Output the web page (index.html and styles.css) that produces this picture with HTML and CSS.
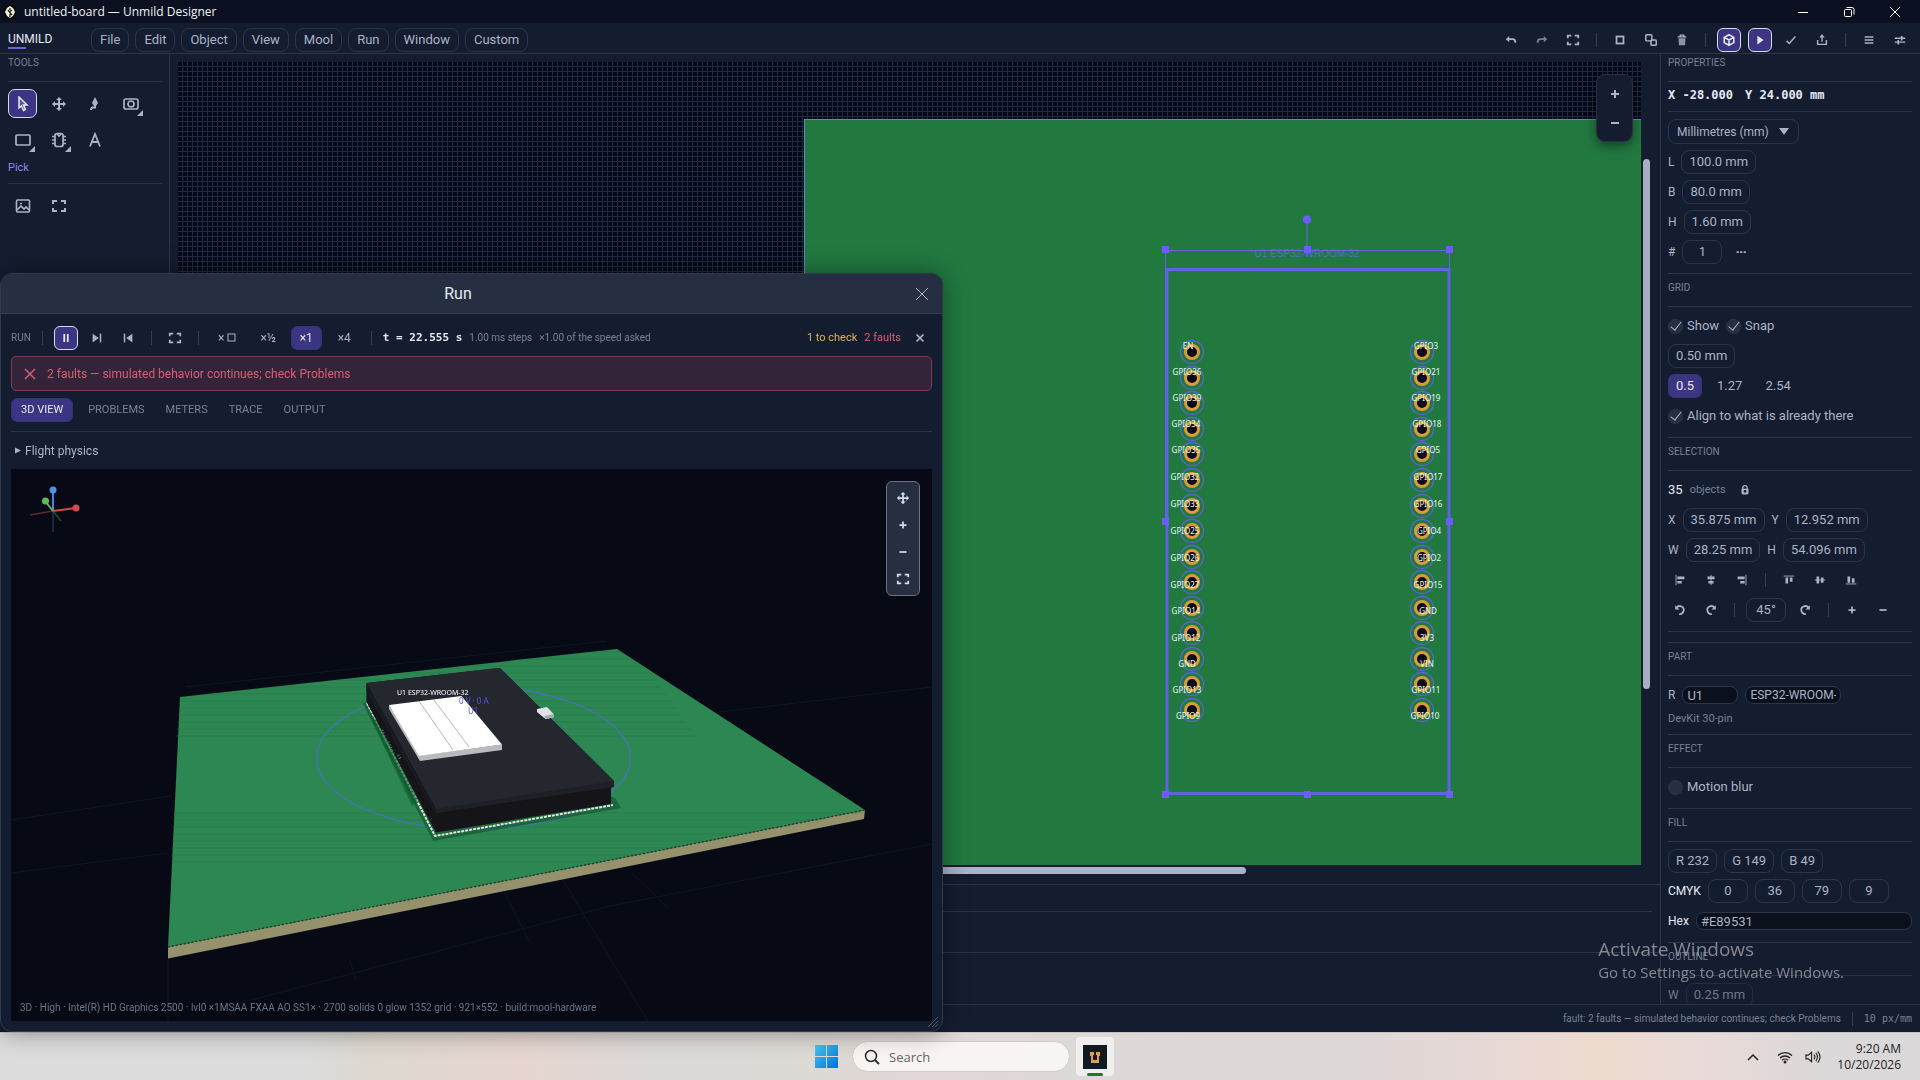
FILE: index.html
```html
<!DOCTYPE html>
<html lang="en">
<head>
<meta charset="utf-8">
<title>untitled-board — Unmild Designer</title>
<link rel="stylesheet" href="styles.css">
</head>
<body>
<svg class="defs" aria-hidden="true">
  <symbol id="i-fit" viewBox="0 0 16 16"><path d="M2 6V3h4M10 3h4v3M14 10v3h-4M6 13H2v-3" fill="none" stroke="currentColor" stroke-width="2"/></symbol>
  <symbol id="i-move" viewBox="0 0 16 16"><path d="M8 3v10M3 8h10" fill="none" stroke="currentColor" stroke-width="2"/><path d="M8 1l3 3H5zM8 15l3-3H5zM1 8l3-3v6zM15 8l-3-3v6z" fill="currentColor"/></symbol>
  <symbol id="i-plus" viewBox="0 0 16 16"><path d="M8 4v8M4 8h8" fill="none" stroke="currentColor" stroke-width="2"/></symbol>
  <symbol id="i-minus" viewBox="0 0 16 16"><path d="M4 8h8" fill="none" stroke="currentColor" stroke-width="2"/></symbol>
  <symbol id="i-x" viewBox="0 0 16 16"><path d="M4 4l8 8M12 4l-8 8" fill="none" stroke="currentColor" stroke-width="2"/></symbol>
  <symbol id="i-cw" viewBox="0 0 16 16"><path d="M12 5.500A4.500 4.500 0 1 0 9 12.500" fill="none" stroke="currentColor" stroke-width="2"/><path d="M13.500 2.500v5h-5z" fill="currentColor"/></symbol>
  <symbol id="i-ccw" viewBox="0 0 16 16"><path d="M4 5.500A4.500 4.500 0 1 1 7 12.500" fill="none" stroke="currentColor" stroke-width="2"/><path d="M2.500 2.500v5h5z" fill="currentColor"/></symbol>
  <g id="pad"><circle r="11.500" fill="none" stroke="#5b63d6" stroke-width="1.300"/><circle r="6.500" fill="#0a0a1a" stroke="#dc9a3a" stroke-width="3"/></g>
</svg>

<header class="titlebar">
  <svg class="app-ico" viewBox="0 0 12 14"><rect width="12" height="14" fill="#0a0a0a"/><path d="M3 3l3-2 3 2 2 4-2 4-3 2-3-2-2-4z" fill="#f2efdc"/><path d="M4 5l4 5M6 3v2M6 9v3M8 5l-3 2" stroke="#222" stroke-width="1.300"/></svg>
  <span class="title">untitled-board — Unmild Designer</span>
  <div class="winctl">
    <button aria-label="Minimize"><svg viewBox="0 0 12 12"><path d="M1 6.500h10"/></svg></button>
    <button aria-label="Restore"><svg viewBox="0 0 12 12"><rect x="1.500" y="3.500" width="7" height="7" rx="1"/><path d="M3.500 1.500h5.500a2 2 0 0 1 2 2v5"/></svg></button>
    <button aria-label="Close"><svg viewBox="0 0 12 12"><path d="M1 1l10 10M11 1L1 11"/></svg></button>
  </div>
</header>

<nav class="menubar">
  <span class="brand">UNMILD</span>
  <div class="menus">
    <button class="pill">File</button><button class="pill">Edit</button><button class="pill">Object</button><button class="pill">View</button><button class="pill">Mool</button><button class="pill">Run</button><button class="pill">Window</button><button class="pill">Custom</button>
  </div>
  <div class="bar">
    <button class="ib" aria-label="Undo"><svg viewBox="0 0 16 16"><path d="M4 7h6q3 0 3 4" fill="none" stroke="currentColor" stroke-width="2"/><path d="M2 7l4-3.500v7z" fill="currentColor"/></svg></button>
    <button class="ib dim" aria-label="Redo"><svg viewBox="0 0 16 16"><path d="M12 7H6q-3 0-3 4" fill="none" stroke="currentColor" stroke-width="2"/><path d="M14 7l-4-3.500v7z" fill="currentColor"/></svg></button>
    <button class="ib" aria-label="Fit"><svg><use href="#i-fit"/></svg></button>
    <i class="sep"></i>
    <button class="ib" aria-label="Select all"><svg viewBox="0 0 16 16"><rect x="4" y="4" width="8" height="8" fill="none" stroke="currentColor" stroke-width="2"/></svg></button>
    <button class="ib" aria-label="Duplicate"><svg viewBox="0 0 16 16"><rect x="2" y="2" width="7" height="7" rx="1" fill="none" stroke="currentColor" stroke-width="1.700"/><rect x="8" y="8" width="6" height="6" rx="1" fill="none" stroke="currentColor" stroke-width="1.700"/></svg></button>
    <button class="ib" aria-label="Delete"><svg viewBox="0 0 16 16"><path d="M3 4.500h10M6 4V2.500h4V4" fill="none" stroke="currentColor" stroke-width="1.500"/><path d="M4 6h8l-.5 8h-7z" fill="currentColor" opacity=".8"/></svg></button>
    <i class="sep"></i>
    <button class="ib on" aria-label="3D view"><svg viewBox="0 0 16 16"><path d="M8 2l5.500 3v6L8 14l-5.500-3V5zM2.500 5L8 8l5.500-3M8 8v6" fill="none" stroke="currentColor" stroke-width="1.800"/></svg></button>
    <button class="ib on" aria-label="Run"><svg viewBox="0 0 16 16"><path d="M5 3l7 5-7 5z" fill="currentColor"/></svg></button>
    <button class="ib" aria-label="Check"><svg viewBox="0 0 16 16"><path d="M3 9l3 3 7-8" fill="none" stroke="currentColor" stroke-width="1.700"/></svg></button>
    <button class="ib" aria-label="Export"><svg viewBox="0 0 16 16"><path d="M3 8v5h10V8M8 10V3" fill="none" stroke="currentColor" stroke-width="1.600"/><path d="M8 1l3 4H5z" fill="currentColor"/></svg></button>
    <i class="sep"></i>
    <button class="ib" aria-label="Menu"><svg viewBox="0 0 16 16"><path d="M3 4.500h10M3 8h10M3 11.500h10" stroke="currentColor" stroke-width="1.700"/></svg></button>
    <button class="ib" aria-label="Settings"><svg viewBox="0 0 16 16"><path d="M2 6h12M2 10.500h12" stroke="currentColor" stroke-width="1.500"/><path d="M9 3.500h2v5H9zM5 8h2v5H5z" fill="currentColor"/></svg></button>
  </div>
</nav>

<main class="work">
  <aside class="tools">
    <h2 class="sec first">TOOLS</h2>
    <div class="toolgrid">
      <button class="tb on" aria-label="Pick"><svg viewBox="0 0 16 16"><path d="M4 1l8 8H8.500l2 4.500-2 1-2-4.500L4 12z" fill="#5a55a8" stroke="currentColor" stroke-width="1.500"/></svg></button>
      <button class="tb" aria-label="Move"><svg><use href="#i-move"/></svg></button>
      <button class="tb" aria-label="Route"><svg viewBox="0 0 16 16"><path d="M8 1l3 6-2 3H7L5 7z" fill="currentColor"/><path d="M8 9v2.500H6q-2 0-2 2.500" fill="none" stroke="currentColor" stroke-width="2"/></svg></button>
      <button class="tb more" aria-label="Via"><svg viewBox="0 0 16 16"><rect x="1" y="3" width="14" height="10" rx="2" fill="none" stroke="currentColor" stroke-width="1.700"/><circle cx="8" cy="8" r="3" fill="none" stroke="currentColor" stroke-width="1.700"/></svg></button>
      <button class="tb more" aria-label="Rectangle"><svg viewBox="0 0 16 16"><rect x="1" y="3" width="14" height="10" rx="1" fill="none" stroke="currentColor" stroke-width="1.700"/></svg></button>
      <button class="tb more" aria-label="Part"><svg viewBox="0 0 16 16"><rect x="4" y="1.500" width="8" height="13" rx="2" fill="none" stroke="currentColor" stroke-width="1.700"/><path d="M1 4.500h3M1 8h3M1 11.500h3M12 4.500h3M12 8h3M12 11.500h3M6 2l2 2 2-2" fill="none" stroke="currentColor" stroke-width="1.700"/></svg></button>
      <button class="tb" aria-label="Text"><svg viewBox="0 0 16 16"><path d="M3 14.500L8 2l5 12.500M5 10h6" fill="none" stroke="currentColor" stroke-width="1.800"/></svg></button>
    </div>
    <p class="pick">Pick</p>
    <div class="toolgrid lined">
      <button class="tb" aria-label="Image"><svg viewBox="0 0 16 16"><rect x="1.500" y="2" width="13" height="12" rx="1" fill="none" stroke="currentColor" stroke-width="1.600"/><path d="M2 12l4-4 3 3 2-2 3 3" fill="none" stroke="currentColor" stroke-width="1.600"/><circle cx="6" cy="5.500" r="1" fill="currentColor"/></svg></button>
      <button class="tb" aria-label="Fit view"><svg><use href="#i-fit"/></svg></button>
    </div>
  </aside>

  <section class="center">
    <div class="stage">
      <div class="canvas">
        <svg class="pcb">
          <defs><pattern id="grid" width="5" height="5" patternUnits="userSpaceOnUse"><rect width="5" height="5" fill="#1e2b45"/><rect width="4" height="4" fill="#050816"/></pattern></defs>
          <rect width="100%" height="100%" fill="url(#grid)"/>
          <rect x="626.500" y="57.500" width="3000" height="3000" fill="#217940" stroke="#5f86c8"/>
          <g transform="translate(-178 -62)">
            <text class="ref" x="1307" y="257">U1 ESP32-WROOM-32</text>
            <path d="M1165.500 521V250.500H1449.500V521M1307 250V220" fill="none" stroke="#6464e0"/>
            <rect x="1167" y="269.500" width="282" height="524" fill="none" stroke="#5f63e2" stroke-width="3"/>
            <g><use href="#pad" x="1192" y="352"/><use href="#pad" x="1192" y="378"/><use href="#pad" x="1192" y="403"/><use href="#pad" x="1192" y="429"/><use href="#pad" x="1192" y="454"/><use href="#pad" x="1192" y="480"/><use href="#pad" x="1192" y="506"/><use href="#pad" x="1192" y="531"/><use href="#pad" x="1192" y="557"/><use href="#pad" x="1192" y="582"/><use href="#pad" x="1192" y="608"/><use href="#pad" x="1192" y="633"/><use href="#pad" x="1192" y="659"/><use href="#pad" x="1192" y="684"/><use href="#pad" x="1192" y="710"/></g>
            <g><use href="#pad" x="1422" y="352"/><use href="#pad" x="1422" y="378"/><use href="#pad" x="1422" y="403"/><use href="#pad" x="1422" y="429"/><use href="#pad" x="1422" y="454"/><use href="#pad" x="1422" y="480"/><use href="#pad" x="1422" y="506"/><use href="#pad" x="1422" y="531"/><use href="#pad" x="1422" y="557"/><use href="#pad" x="1422" y="582"/><use href="#pad" x="1422" y="608"/><use href="#pad" x="1422" y="633"/><use href="#pad" x="1422" y="659"/><use href="#pad" x="1422" y="684"/><use href="#pad" x="1422" y="710"/></g>
            <g class="pins">
              <text x="1188" y="349">EN</text><text x="1187" y="375">GPIO36</text><text x="1187" y="401">GPIO39</text><text x="1186" y="427">GPIO34</text><text x="1186" y="453">GPIO35</text><text x="1185" y="480">GPIO32</text><text x="1185" y="507">GPIO33</text><text x="1185" y="534">GPIO25</text><text x="1185" y="561">GPIO26</text><text x="1185" y="588">GPIO27</text><text x="1186" y="614">GPIO14</text><text x="1186" y="641">GPIO12</text><text x="1187" y="667">GND</text><text x="1187" y="693">GPIO13</text><text x="1188" y="719">GPIO9</text>
              <text x="1426" y="349">GPIO3</text><text x="1426" y="375">GPIO21</text><text x="1426" y="401">GPIO19</text><text x="1427" y="427">GPIO18</text><text x="1428" y="453">GPIO5</text><text x="1428" y="480">GPIO17</text><text x="1428" y="507">GPIO16</text><text x="1429" y="534">GPIO4</text><text x="1429" y="561">GPIO2</text><text x="1428" y="588">GPIO15</text><text x="1428" y="614">GND</text><text x="1427" y="641">3V3</text><text x="1427" y="667">VIN</text><text x="1426" y="693">GPIO11</text><text x="1425" y="719">GPIO10</text>
            </g>
            <g fill="#6c5cff"><circle cx="1307" cy="219.500" r="4"/><path d="M1162 246h7v7h-7zM1304 246h7v7h-7zM1446 246h7v7h-7zM1162 518h7v7h-7zM1446 518h7v7h-7zM1162 791h7v7h-7zM1304 791h7v7h-7zM1446 791h7v7h-7z"/></g>
          </g>
        </svg>
        <div class="zoombox"><button aria-label="Zoom in"><svg><use href="#i-plus"/></svg></button><button aria-label="Zoom out"><svg><use href="#i-minus"/></svg></button></div>
      </div>
      <div class="vscroll"><i></i></div>
      <div class="hscroll"><i></i></div>
    </div>
    <div class="dock"><div class="dock-a"></div><div class="dock-b"></div></div>
  </section>

  <aside class="props">
    <h2 class="sec first">PROPERTIES</h2>
    <div class="coord mono"><span>X -28.000</span><span>Y 24.000 mm</span></div>
    <div class="body">
      <div class="row tall"><span class="select"><select aria-label="Units"><option>Millimetres (mm)</option></select></span></div>
      <div class="row"><label for="pl">L</label><button id="pl" class="pill">100.0 mm</button></div>
      <div class="row"><label for="pb">B</label><button id="pb" class="pill">80.0 mm</button></div>
      <div class="row"><label for="ph">H</label><button id="ph" class="pill">1.60 mm</button></div>
      <div class="row"><label for="pn">#</label><button id="pn" class="pill num">1</button><button class="ib dots" aria-label="More"><svg viewBox="0 0 16 16"><path d="M3 8h2.500M7 8h2.500M11 8h2.500" stroke="currentColor" stroke-width="2"/></svg></button></div>
    </div>
    <h2 class="sec">GRID</h2>
    <div class="body">
      <div class="row"><label class="ck"><input type="checkbox" checked>Show</label><label class="ck"><input type="checkbox" checked>Snap</label></div>
      <div class="row"><button class="pill">0.50 mm</button></div>
      <div class="row"><button class="flat sel">0.5</button><button class="flat">1.27</button><button class="flat">2.54</button></div>
      <div class="row"><label class="ck"><input type="checkbox" checked>Align to what is already there</label></div>
    </div>
    <h2 class="sec">SELECTION</h2>
    <div class="body">
      <div class="row"><b class="cnt">35</b><span class="mut">objects</span><button class="ib" aria-label="Lock"><svg viewBox="0 0 16 16"><path d="M5.500 7V5.500a2.500 2.500 0 0 1 5 0V7" fill="none" stroke="currentColor" stroke-width="1.500"/><path d="M4 6.500h8V11a2 2 0 0 1-2 2H6a2 2 0 0 1-2-2z" fill="currentColor"/><circle cx="8" cy="9.500" r="1.500" fill="#141c2f"/></svg></button></div>
      <div class="row"><label for="sx">X</label><button id="sx" class="pill">35.875 mm</button><label for="sy">Y</label><button id="sy" class="pill">12.952 mm</button></div>
      <div class="row"><label for="sw">W</label><button id="sw" class="pill">28.25 mm</button><label for="sh">H</label><button id="sh" class="pill">54.096 mm</button></div>
      <div class="row">
        <button class="ib" aria-label="Align left"><svg viewBox="0 0 16 16"><path d="M3.500 2v12" stroke="currentColor"/><path d="M5 4h8v3H5zM5 9h5v3H5z" fill="currentColor"/></svg></button>
        <button class="ib" aria-label="Align centre"><svg viewBox="0 0 16 16"><path d="M8 2v12" stroke="currentColor"/><path d="M4 4h8v3H4zM5 9h6v3H5z" fill="currentColor"/></svg></button>
        <button class="ib" aria-label="Align right"><svg viewBox="0 0 16 16"><path d="M12.500 2v12" stroke="currentColor"/><path d="M3 4h8v3H3zM6 9h5v3H6z" fill="currentColor"/></svg></button>
        <i class="sep"></i>
        <button class="ib" aria-label="Align top"><svg viewBox="0 0 16 16"><path d="M2 3.500h12" stroke="currentColor"/><path d="M4 5h3v7H4zM9 5h3v5H9z" fill="currentColor"/></svg></button>
        <button class="ib" aria-label="Align middle"><svg viewBox="0 0 16 16"><path d="M2 8h12" stroke="currentColor"/><path d="M4 4h3v8H4zM9 5h3v6H9z" fill="currentColor"/></svg></button>
        <button class="ib" aria-label="Align bottom"><svg viewBox="0 0 16 16"><path d="M2 12.500h12" stroke="currentColor"/><path d="M4 4h3v7H4zM9 6h3v5H9z" fill="currentColor"/></svg></button>
      </div>
      <div class="row">
        <button class="ib" aria-label="Rotate left"><svg><use href="#i-ccw"/></svg></button><button class="ib" aria-label="Rotate right"><svg><use href="#i-cw"/></svg></button>
        <i class="sep"></i>
        <button class="pill num">45°</button><button class="ib" aria-label="Rotate by angle"><svg><use href="#i-cw"/></svg></button>
        <i class="sep"></i>
        <button class="ib" aria-label="Grow"><svg><use href="#i-plus"/></svg></button><button class="ib" aria-label="Shrink"><svg><use href="#i-minus"/></svg></button>
      </div>
    </div>
    <hr>
    <h2 class="sec">PART</h2>
    <div class="body">
      <div class="row"><label for="pr">R</label><input id="pr" class="txt w-s" value="U1"><input class="txt w-m" aria-label="Part name" value="ESP32-WROOM-32"></div>
      <p class="note">DevKit 30-pin</p>
    </div>
    <h2 class="sec">EFFECT</h2>
    <div class="body"><div class="row"><label class="ck"><input type="checkbox">Motion blur</label></div></div>
    <h2 class="sec">FILL</h2>
    <div class="body">
      <div class="row"><button class="pill">R 232</button><button class="pill">G 149</button><button class="pill">B 49</button></div>
      <div class="row"><span class="hi">CMYK</span><button class="pill num">0</button><button class="pill num">36</button><button class="pill num">79</button><button class="pill num">9</button></div>
      <div class="row"><label class="hi" for="hex">Hex</label><input id="hex" class="txt grow" value="#E89531"></div>
    </div>
    <h2 class="sec">OUTLINE</h2>
    <div class="body faded"><div class="row"><label for="ow">W</label><button id="ow" class="pill">0.25 mm</button></div></div>
  </aside>
</main>

<footer class="status"><span>fault: 2 faults — simulated behavior continues; check Problems</span><i class="sep"></i><span class="mono">10 px/mm</span></footer>

<section class="run" aria-label="Run">
  <header class="run-head"><h1>Run</h1><button aria-label="Close"><svg viewBox="0 0 14 14"><path d="M1 1l12 12M13 1L1 13" stroke="currentColor"/></svg></button></header>
  <div class="run-body">
    <div class="runbar">
      <span class="lbl">RUN</span><i class="sep"></i>
      <button class="ib on" aria-label="Pause"><svg viewBox="0 0 16 16"><path d="M6 3.500v9M10 3.500v9" stroke="currentColor" stroke-width="2"/></svg></button>
      <button class="ib" aria-label="Step"><svg viewBox="0 0 16 16"><path d="M3 3l7 5-7 5z" fill="currentColor"/><path d="M12 3v10" stroke="currentColor" stroke-width="1.700"/></svg></button>
      <button class="ib" aria-label="Back to start"><svg viewBox="0 0 16 16"><path d="M13 3L6 8l7 5z" fill="currentColor"/><path d="M4 3v10" stroke="currentColor" stroke-width="1.700"/></svg></button>
      <i class="sep"></i>
      <button class="ib" aria-label="Fit"><svg><use href="#i-fit"/></svg></button>
      <i class="sep"></i>
      <button class="flat sp">×<svg viewBox="0 0 10 10"><rect x="1" y="1" width="7" height="7" fill="none" stroke="currentColor"/></svg></button><button class="flat sp">×½</button><button class="flat sp sel">×1</button><button class="flat sp">×4</button>
      <i class="sep"></i>
      <b class="mono time">t = 22.555 s</b><span class="lbl">1.00 ms steps</span><span class="lbl">×1.00 of the speed asked</span>
      <span class="warn">1 to check</span><span class="err">2 faults</span>
      <button class="ib" aria-label="Dismiss"><svg><use href="#i-x"/></svg></button>
    </div>
    <div class="banner" role="alert"><svg viewBox="0 0 12 12"><path d="M1 1l10 10M11 1L1 11" stroke="currentColor" stroke-width="1.500"/></svg>2 faults — simulated behavior continues; check Problems</div>
    <div class="tabs"><button class="flat sel">3D VIEW</button><button class="flat">PROBLEMS</button><button class="flat">METERS</button><button class="flat">TRACE</button><button class="flat">OUTPUT</button></div>
    <button class="fold"><svg viewBox="0 0 6 6"><path d="M0 0l6 3-6 3z" fill="currentColor"/></svg>Flight physics</button>
    <div class="view3d">
      <svg class="scene" viewBox="11 469 921 552" preserveAspectRatio="xMidYMid meet">
        <defs>
          <pattern id="hatch" width="4" height="7" patternUnits="userSpaceOnUse"><rect width="4" height="2" fill="#24794a" opacity=".3"/></pattern>
        </defs>
        <g stroke="#0f1522" fill="none"><path d="M11 820l160-24M11 873l157-20M720 712l212-25M240 1003l370-97M610 906l322-62M563 880l90 150M168 958v63M186 687l420-46M350 960l6 20M500 883l30 60M632 873l36 35"/></g>
        <path d="M168 947v11.500L864 819l1-9z" fill="#95916c"/>
        <path d="M180 697L617 649 865 810 168 947z" fill="#2c8752"/>
        <path d="M180 697L617 649 650 671 700 742H176z M174 812H865L600 862H171z" fill="url(#hatch)"/>
        <path d="M168 947L865 810" stroke="#22402a" stroke-width="1.500" stroke-dasharray="2 2"/>
        <ellipse cx="473.500" cy="758" rx="157" ry="71" fill="none" stroke="#4a6fc0" stroke-width="1.200"/>
        <path d="M362 702l71 139 188-33-6-10z" fill="#0e4a28" opacity=".55"/>
        <path d="M367 703L435 836 613 805" fill="none" stroke="#dfe8dc" stroke-width="2" stroke-dasharray="3 1"/>
        <path d="M368 712l20 20 30 70-6 4z" fill="#0b5a2c" opacity=".6"/>
        <path d="M366.500 683V702L436 832.500 611 804V788l3-2.500V781L500 668z" fill="#151419"/>
        <path d="M366.500 683L497 668l4 1L614 781v5L436 813v-4z" fill="#25272f"/>
        <path d="M366.500 683V692L435 813V809z" fill="#191b22"/>
        <path d="M435.500 809L614 781v6l-178 26z" fill="#1e1f27"/>
        <path d="M389 705v4l31 52 82-11v-5.500l-82 11z" fill="#b9bac0"/>
        <path d="M389 705L461.500 696 502 744.500 419 756z" fill="#fff"/>
        <path d="M419 701l34 49M434 700l35 47" stroke="#999" stroke-width=".7"/>
        <path d="M537 709l10-2 6.500 7v3.500l-8 1.500-8.500-7z" fill="#dfe2e6"/><path d="M544 716l9.500-2v3.500l-8 1.500z" fill="#a9adb3"/>
        <path d="M382 730l5 14M388 742l6 13M398 755l3 5" stroke="#2c8752" stroke-width="3" stroke-dasharray="1 2"/>
        <text x="397" y="695" class="t3 n">U1 ESP32-WROOM-32</text>
        <text x="459" y="704" class="t3 p">0 V · 0 A</text><text x="468" y="714" class="t3 p">U1</text>
        <g stroke-width="1.500"><path d="M53 511V532" stroke="#1f3557"/><path d="M53 511l-23 4" stroke="#5b2730"/><path d="M53 511l8 10" stroke="#2a4a30"/><path d="M53 511V490" stroke="#4a86d8" stroke-width="2"/><path d="M53 511l-8-10" stroke="#62b862" stroke-width="2"/><path d="M53 511l23-3" stroke="#d24a48" stroke-width="2"/></g>
        <circle cx="53" cy="490" r="3.500" fill="#5590e0"/><circle cx="45.500" cy="501" r="3.500" fill="#62b862"/><circle cx="76" cy="508" r="3.500" fill="#d24a48"/>
      </svg>
      <div class="nav3d"><button aria-label="Pan"><svg><use href="#i-move"/></svg></button><button aria-label="Zoom in"><svg><use href="#i-plus"/></svg></button><button aria-label="Zoom out"><svg><use href="#i-minus"/></svg></button><button aria-label="Fit"><svg><use href="#i-fit"/></svg></button></div>
      <p class="gpu">3D · High · Intel(R) HD Graphics 2500 · lvl0 ×1MSAA FXAA AO SS1× · 2700 solids 0 glow 1352 grid · 921×552 · build:mool-hardware</p>
    </div>
  </div>
  <svg class="grip" viewBox="0 0 12 12"><path d="M1 11L11 1M5 11l6-6M8 11l3-3" stroke="#4b5468"/></svg>
</section>

<div class="watermark"><p>Activate Windows</p><p>Go to Settings to activate Windows.</p></div>

<footer class="taskbar">
  <div class="mid">
    <button class="start" aria-label="Start"><svg viewBox="0 0 23 23"><defs><linearGradient id="w" x2="1" y2="1"><stop stop-color="#48c8f8"/><stop offset="1" stop-color="#0470d0"/></linearGradient></defs><path d="M0 0h11v11H0zM12 0h11v11H12zM0 12h11v11H0zM12 12h11v11H12z" fill="url(#w)"/></svg></button>
    <label class="search"><svg viewBox="0 0 16 16"><circle cx="7" cy="7" r="5.500" fill="none" stroke="#2b2b2b" stroke-width="1.500"/><path d="M11 11l4 4" stroke="#2b2b2b" stroke-width="2"/></svg><input placeholder="Search" aria-label="Search"></label>
    <button class="tile" aria-label="Unmild Designer"><svg viewBox="0 0 24 24"><path d="M0 0h24v24H0z" fill="#0f1a24"/><path d="M7 7h4v3h-1v5h4v-5h-1V7h4v4h-1v7H8v-7H7z" fill="#e89a50"/></svg></button>
  </div>
  <div class="tray">
    <svg class="ch" viewBox="0 0 12 12"><path d="M1 9l5-5 5 5" fill="none" stroke="#222" stroke-width="1.500"/></svg>
    <svg viewBox="0 0 16 16"><path d="M1 6.500a10 10 0 0 1 14 0M3 9a7.200 7.200 0 0 1 10 0M5 11.300a4.300 4.300 0 0 1 6 0" fill="none" stroke="#222" stroke-width="1.300"/><circle cx="8" cy="13" r="1.500" fill="#222"/></svg>
    <svg viewBox="0 0 17 16"><path d="M1 6v4h2.500L7 13V3L3.500 6zM9.500 5.500q2 2.500 0 5M11.500 3.500q3.500 4.500 0 9M13.500 2q5 6 0 12" fill="none" stroke="#222" stroke-width="1.200"/></svg>
    <div class="clock"><time>9:20 AM</time><time>10/20/2026</time></div>
  </div>
</footer>
</body>
</html>
```
FILE: styles.css
```css
:root {
  --bg: #141c2f;
  --line: #2c364a;
  --text: #abb3c6;
  --mute: #788197;
  --hi: #e6eaf6;
  --accent: #3b3584;
}
* { box-sizing: border-box; }
body {
  margin: 0;
  height: 100vh;
  display: flex;
  flex-direction: column;
  overflow: hidden;
  background: var(--bg);
  color: var(--text);
  font: 13px/16px Roboto, "Noto Sans", sans-serif;
}
button, input, select { font: inherit; color: inherit; margin: 0; }
button { background: none; border: 0; padding: 0; display: flex; align-items: center; justify-content: center; }
svg { width: 16px; height: 16px; display: block; flex: none; }
h1, h2, p { margin: 0; font-weight: 400; }
.defs { position: absolute; width: 0; height: 0; }
.mono { font-family: "DejaVu Sans Mono", "Liberation Mono", monospace; }

/* Window title */
.titlebar { flex: none; height: 23px; display: flex; align-items: center; background: #0b1020; padding: 0 2px 0 4px; gap: 8px; color: #eef0f6; }
.titlebar .app-ico { width: 12px; height: 14px; }
.title { font: 12px/16px "Open Sans", "Noto Sans", sans-serif; }
.winctl { margin-left: auto; display: flex; }
.winctl button { width: 46px; height: 20px; }
.winctl svg { width: 12px; height: 12px; fill: none; stroke: #fff; }

/* Menu and toolbar */
.menubar { flex: none; height: 31px; display: flex; align-items: center; border-bottom: 1px solid var(--line); padding: 4px 8px 0; }
.brand { width: 83px; height: 18px; color: var(--hi); line-height: 16px; font-size: 12px; }
.brand::after { content: ""; display: block; width: 18px; height: 2px; background: #6c63d8; }
.menus, .bar, .row, .runbar { display: flex; align-items: center; gap: 7px; }
.menus { gap: 6px; }
.bar { margin-left: auto; }
.pill { height: 24px; padding: 0 8px; border: 1px solid var(--line); border-radius: 8px; white-space: nowrap; }
.row .pill { padding: 0 7px; }
.row .pill.num { width: 40px; padding: 0; }
.ib { width: 24px; height: 24px; border-radius: 6px; flex: none; }
.ib svg { width: 14px; height: 14px; }
.ib.dim { color: var(--mute); }
.ib.on, .tb.on { background: var(--accent); border: 1px solid #d8dcf2; color: var(--hi); }
.sep { width: 1px; height: 14px; background: #333e53; margin: 0 4px; flex: none; }

.work { flex: 1; min-height: 0; display: flex; }

/* Section headings */
.sec { flex: none; padding: 5px 0 10px; border-top: 1px solid var(--line); border-bottom: 1px solid var(--line); font-size: 10px; line-height: 17px; color: var(--mute); }
.sec.first { padding-top: 0; border-top: 0; }

/* Left tools */
.tools { flex: none; width: 170px; padding: 0 7px 0 8px; border-right: 1px solid var(--line); }
.toolgrid { display: flex; flex-wrap: wrap; gap: 7px; padding-top: 7px; }
.toolgrid.lined { border-top: 1px solid var(--line); }
.tb { width: 29px; height: 29px; border-radius: 7px; position: relative; }
.tb.more::after { content: ""; position: absolute; right: 2px; bottom: 2px; border: 3px solid; border-color: transparent currentColor currentColor transparent; }
.pick { padding: 6px 0 7px; font-size: 11px; color: #8f86f0; }

/* Board canvas */
.center { flex: 1; min-width: 0; display: flex; flex-direction: column; }
.stage { flex: 1; min-height: 0; display: grid; grid-template: 1fr 7px / 1fr 7px; gap: 2px; padding: 8px 10px 10px 8px; }
.canvas { position: relative; min-width: 0; min-height: 0; overflow: hidden; }
.pcb { width: 100%; height: 100%; }
.ref { font: 10px "Liberation Sans", sans-serif; fill: #4f6ec8; text-anchor: middle; }
.pins text { font: 8px "Noto Sans", sans-serif; fill: #eafbea; text-anchor: middle; }
.zoombox { position: absolute; right: 8px; top: 12px; width: 37px; padding: 4px 0; background: var(--bg); border: 1px solid #2a3046; border-radius: 9px; box-shadow: 0 4px 12px rgba(0, 0, 0, .45); color: var(--text); }
.zoombox button { width: 100%; height: 29px; }
.vscroll { padding-top: 97px; }
.vscroll i { display: block; width: 7px; height: 75%; background: #a7b0c2; border-radius: 4px; }
.hscroll i { display: block; width: 73%; height: 7px; background: #a9b2c6; border-radius: 4px; }
.dock { flex: none; border-top: 1px solid var(--line); }
.dock-a { height: 27px; margin: 0 8px; border-bottom: 1px solid var(--line); }
.dock-b { height: 41px; border-bottom: 1px solid var(--line); margin-bottom: 51px; }

/* Right properties */
.props { flex: none; width: 260px; padding: 0 8px 0 7px; border-left: 1px solid var(--line); display: flex; flex-direction: column; overflow: hidden; }
.props > * { flex: none; }
.coord { display: flex; gap: 12px; padding: 5px 0 8px; border-bottom: 1px solid var(--line); font-weight: 700; font-size: 12px; color: var(--hi); }
.body { padding: 7px 0 9px; display: flex; flex-direction: column; gap: 6px; }
.row { height: 24px; }
.row.tall { height: 25px; }
.row > label:not(.ck) { font-size: 12px; }
.select { position: relative; width: 131px; height: 25px; }
.select select { appearance: none; width: 100%; height: 100%; background: var(--bg); border: 1px solid var(--line); border-radius: 8px; padding: 0 8px; font-size: 12px; }
.select::after { content: ""; position: absolute; right: 10px; top: 9px; border: 5px solid transparent; border-top: 7px solid var(--text); border-bottom: 0; pointer-events: none; }
.ck { display: flex; align-items: center; gap: 4px; }
.ck input { appearance: none; width: 15px; height: 15px; border-radius: 50%; background: #262f42; border: 1px solid #2d374b; display: grid; place-items: center; }
.ck input:checked::after { content: ""; width: 5px; height: 10px; margin-top: -3px; border: solid var(--text); border-width: 0 1px 1px 0; transform: rotate(38deg); }
.flat { height: 24px; padding: 0 8px; border-radius: 7px; }
.flat.sel { background: var(--accent); color: var(--hi); box-shadow: inset 0 0 0 1px #35366f; }
.cnt, .hi { color: var(--hi); font-weight: 400; }
.hi { font-size: 12px; }
.mut, .note { color: var(--mute); font-size: 11px; }
.note { line-height: 12px; }
.txt { height: 18px; padding: 0 4px; border: 1px solid var(--line); border-radius: 8px; background: #0b101d; min-width: 0; }
.w-s { width: 56px; }
.w-m { width: 96px; font-size: 12px; }
.grow { flex: 1; }
.props hr { width: 100%; margin: 0 0 10px; border: 0; border-top: 1px solid var(--line); }
.faded { opacity: .6; }

/* Status bar */
.status { flex: none; height: 28px; border-top: 1px solid var(--line); padding: 0 8px; display: flex; align-items: center; justify-content: flex-end; gap: 7px; font-size: 10px; color: var(--mute); }

/* Run window */
.run { position: fixed; left: 0; top: 273px; bottom: 48px; width: 943px; display: flex; flex-direction: column; background: var(--bg); border: 1px solid #2f3a4f; border-radius: 12px; overflow: hidden; box-shadow: 0 0 24px rgba(0, 0, 0, .4); }
.run-head { flex: none; height: 40px; display: flex; align-items: center; background: #262f42; border-bottom: 1px solid #333e52; padding-right: 13px; }
.run-head h1 { flex: 1; text-align: center; font-size: 16px; line-height: 20px; color: var(--hi); }
.run-head svg { width: 14px; height: 14px; }
.run-body { flex: 1; min-height: 0; display: flex; flex-direction: column; padding: 12px 10px 10px; }
.lbl { font-size: 10px; color: var(--mute); }
.time { font-size: 11px; color: var(--hi); }
.flat.sp { width: 31px; padding: 0; gap: 3px; font-size: 12px; flex: none; }
.flat.sp svg { width: 10px; height: 10px; }
.flat.sp:has(svg) { width: 36px; }
.warn { margin-left: auto; color: #e0b05a; font-size: 11px; }
.err { color: #d75f73; font-size: 11px; }
.banner { flex: none; height: 35px; margin: 6px 0 7px; display: flex; align-items: center; gap: 11px; padding-left: 12px; border: 1px solid #7c3c50; border-radius: 5px; background: #33243a; color: #d75f73; font-size: 12px; }
.banner svg { width: 12px; height: 12px; }
.tabs { display: flex; gap: 5px; padding-bottom: 9px; border-bottom: 1px solid var(--line); font-size: 11px; color: var(--mute); }
.tabs .sel { padding: 0 10px; margin-right: 2px; }
.fold { height: 37px; gap: 4px; padding-left: 4px; justify-content: flex-start; flex: none; font-size: 12px; }
.fold svg { width: 6px; height: 7px; }
.view3d { position: relative; flex: 1; min-height: 0; background: #070a15; }
.scene { width: 100%; height: 100%; }
.t3 { font: 8px "Noto Sans", sans-serif; }
.t3.n { font-size: 7px; fill: #fff; }
.t3.p { fill: #5a4fe0; }
.nav3d { position: absolute; right: 12px; top: 12px; width: 34px; height: 115px; padding: 3px 0; display: flex; flex-direction: column; justify-content: space-around; align-items: center; background: #262f42; border: 1px solid #6b7286; border-radius: 6px; color: #d5daea; }
.nav3d svg { width: 14px; height: 14px; }
.gpu { position: absolute; left: 9px; bottom: 5px; font-size: 10px; color: #6d7485; white-space: nowrap; }
.grip { position: absolute; right: 3px; bottom: 3px; width: 12px; height: 12px; }

/* System notice over the desktop */
.watermark { position: fixed; right: 76px; bottom: 98px; color: rgba(160, 163, 170, .8); font: 15px/20px "Open Sans", "Noto Sans", sans-serif; pointer-events: none; white-space: nowrap; }
.watermark p:first-child { font-size: 19px; line-height: 26px; }

/* Taskbar */
.taskbar { flex: none; height: 48px; display: grid; grid-template-columns: 1fr auto 1fr; align-items: center; border-top: 1px solid #c3c1c1; color: #222; font: 12px/16px "Open Sans", "Noto Sans", sans-serif; background: linear-gradient(90deg, #dcdcdc 0 16%, #ddd9d0 19%, #e7d6d0 27%, #ddd9d7 33%, #ddd9d5 43%, #e3d8d8 49%, #ddd9d7 55%, #ddd7d7 70%, #e6d8d5 77%, #eddbcf 83%, #e9dad8 89%, #dad8d8 95%); }
.mid { grid-column: 2; display: flex; align-items: center; padding-left: 9px; }
.start svg { width: 23px; height: 23px; }
.search { margin: 0 6px 0 14px; width: 218px; height: 31px; display: flex; align-items: center; gap: 9px; padding-left: 11px; border-radius: 16px; background: #f7f4f2; border: 1px solid #cfcbc9; }
.search input { width: 150px; border: 0; background: none; padding: 0; outline: 0; font-size: 13px; }
.search input::placeholder { color: #666; opacity: 1; }
.tile { width: 38px; height: 39px; background: #f1efed; border-radius: 4px; position: relative; }
.tile svg { width: 24px; height: 24px; }
.tile::after { content: ""; position: absolute; left: 11px; bottom: 0; width: 16px; height: 3px; border-radius: 2px; background: #1c7a1c; }
.tray { display: flex; align-items: center; justify-content: flex-end; gap: 12px; padding-right: 19px; }
.tray .ch { width: 12px; height: 12px; margin-right: 6px; }
.clock { display: flex; flex-direction: column; text-align: right; margin-left: 4px; }
```
